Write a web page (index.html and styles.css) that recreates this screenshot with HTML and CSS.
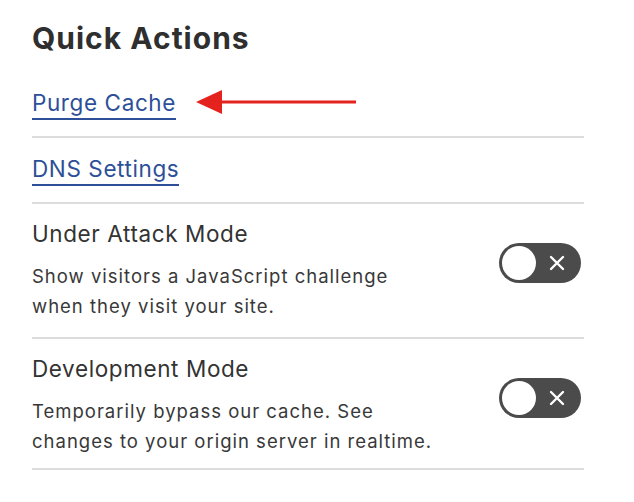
FILE: index.html
```html
<!DOCTYPE html>
<html lang="en">
<head>
<meta charset="utf-8">
<title>Quick Actions</title>
<link rel="stylesheet" href="styles.css">
</head>
<body>
<section class="panel">
  <h1 class="panel-title">Quick Actions</h1>
  <div class="row link-row link-row-first">
    <a class="action-link" href="#">Purge Cache</a>
    <svg class="callout-arrow" width="164" height="28" viewBox="0 0 164 28" aria-hidden="true">
      <line x1="22" y1="13" x2="160" y2="13" stroke="#e5231e" stroke-width="3.2"/>
      <polygon points="0,13 26,1 26,25" fill="#e5231e"/>
    </svg>
  </div>
  <div class="row link-row">
    <a class="action-link" href="#">DNS Settings</a>
  </div>
  <div class="row toggle-row">
    <div class="row-text">
      <div class="row-title">Under Attack Mode</div>
      <p class="row-desc">Show visitors a JavaScript challenge<br>when they visit your site.</p>
    </div>
    <button class="toggle" type="button" aria-label="Under Attack Mode off">
      <span class="knob"></span>
      <svg class="toggle-x" width="16" height="16" viewBox="0 0 16 16"><path d="M2 2 L14 14 M14 2 L2 14" stroke="#fff" stroke-width="2.4" stroke-linecap="round"/></svg>
    </button>
  </div>
  <div class="row toggle-row toggle-row-last">
    <div class="row-text">
      <div class="row-title">Development Mode</div>
      <p class="row-desc">Temporarily bypass our cache. See<br>changes to your origin server in realtime.</p>
    </div>
    <button class="toggle" type="button" aria-label="Development Mode off">
      <span class="knob"></span>
      <svg class="toggle-x" width="16" height="16" viewBox="0 0 16 16"><path d="M2 2 L14 14 M14 2 L2 14" stroke="#fff" stroke-width="2.4" stroke-linecap="round"/></svg>
    </button>
  </div>
</section>
</body>
</html>
```
FILE: styles.css
```css
html, body {
  margin: 0;
  padding: 0;
  background: #ffffff;
}

body {
  font-family: Inter, "Noto Sans", "Liberation Sans", sans-serif;
  color: #333333;
}

.panel {
  width: 552px;
  padding: 20px 0 0 32px;
}

.panel-title {
  margin: 0;
  font-size: 30px;
  line-height: 36px;
  font-weight: 700;
  color: #2f2f2f;
  letter-spacing: 1px;
}

.row {
  position: relative;
  border-bottom: 2px solid #dcdcdc;
}

.link-row {
  display: flex;
  align-items: flex-start;
  padding: 18px 0 16px;
}

.link-row-first {
  padding-top: 34px;
}

.action-link {
  display: block;
  font-size: 22.5px;
  line-height: 26px;
  letter-spacing: 0.6px;
  color: #2d4f98;
  text-decoration: none;
  padding-bottom: 2px;
  border-bottom: 2px solid #2d4f98;
}

.callout-arrow {
  position: absolute;
  left: 164px;
  top: 33px;
}

.toggle-row {
  display: flex;
  justify-content: space-between;
  align-items: flex-start;
  padding: 17px 3px 16px 0;
}

.toggle-row-last {
  padding-bottom: 12px;
}

.row-title {
  font-size: 22.5px;
  line-height: 26px;
  letter-spacing: 0.6px;
  color: #333333;
}

.row-desc {
  margin: 14px 0 0;
  font-size: 18.5px;
  line-height: 30px;
  letter-spacing: 1px;
  color: #383838;
}

.toggle {
  position: relative;
  margin-top: 22px;
  width: 82px;
  height: 40px;
  border: none;
  border-radius: 20px;
  background: #4b4b4b;
  padding: 0 16px 0 0;
  display: flex;
  align-items: center;
  justify-content: flex-end;
  box-sizing: border-box;
}

.knob {
  position: absolute;
  left: 3px;
  top: 3px;
  width: 34px;
  height: 34px;
  border-radius: 50%;
  background: #ffffff;
}

.toggle-x {
  display: block;
}
```
